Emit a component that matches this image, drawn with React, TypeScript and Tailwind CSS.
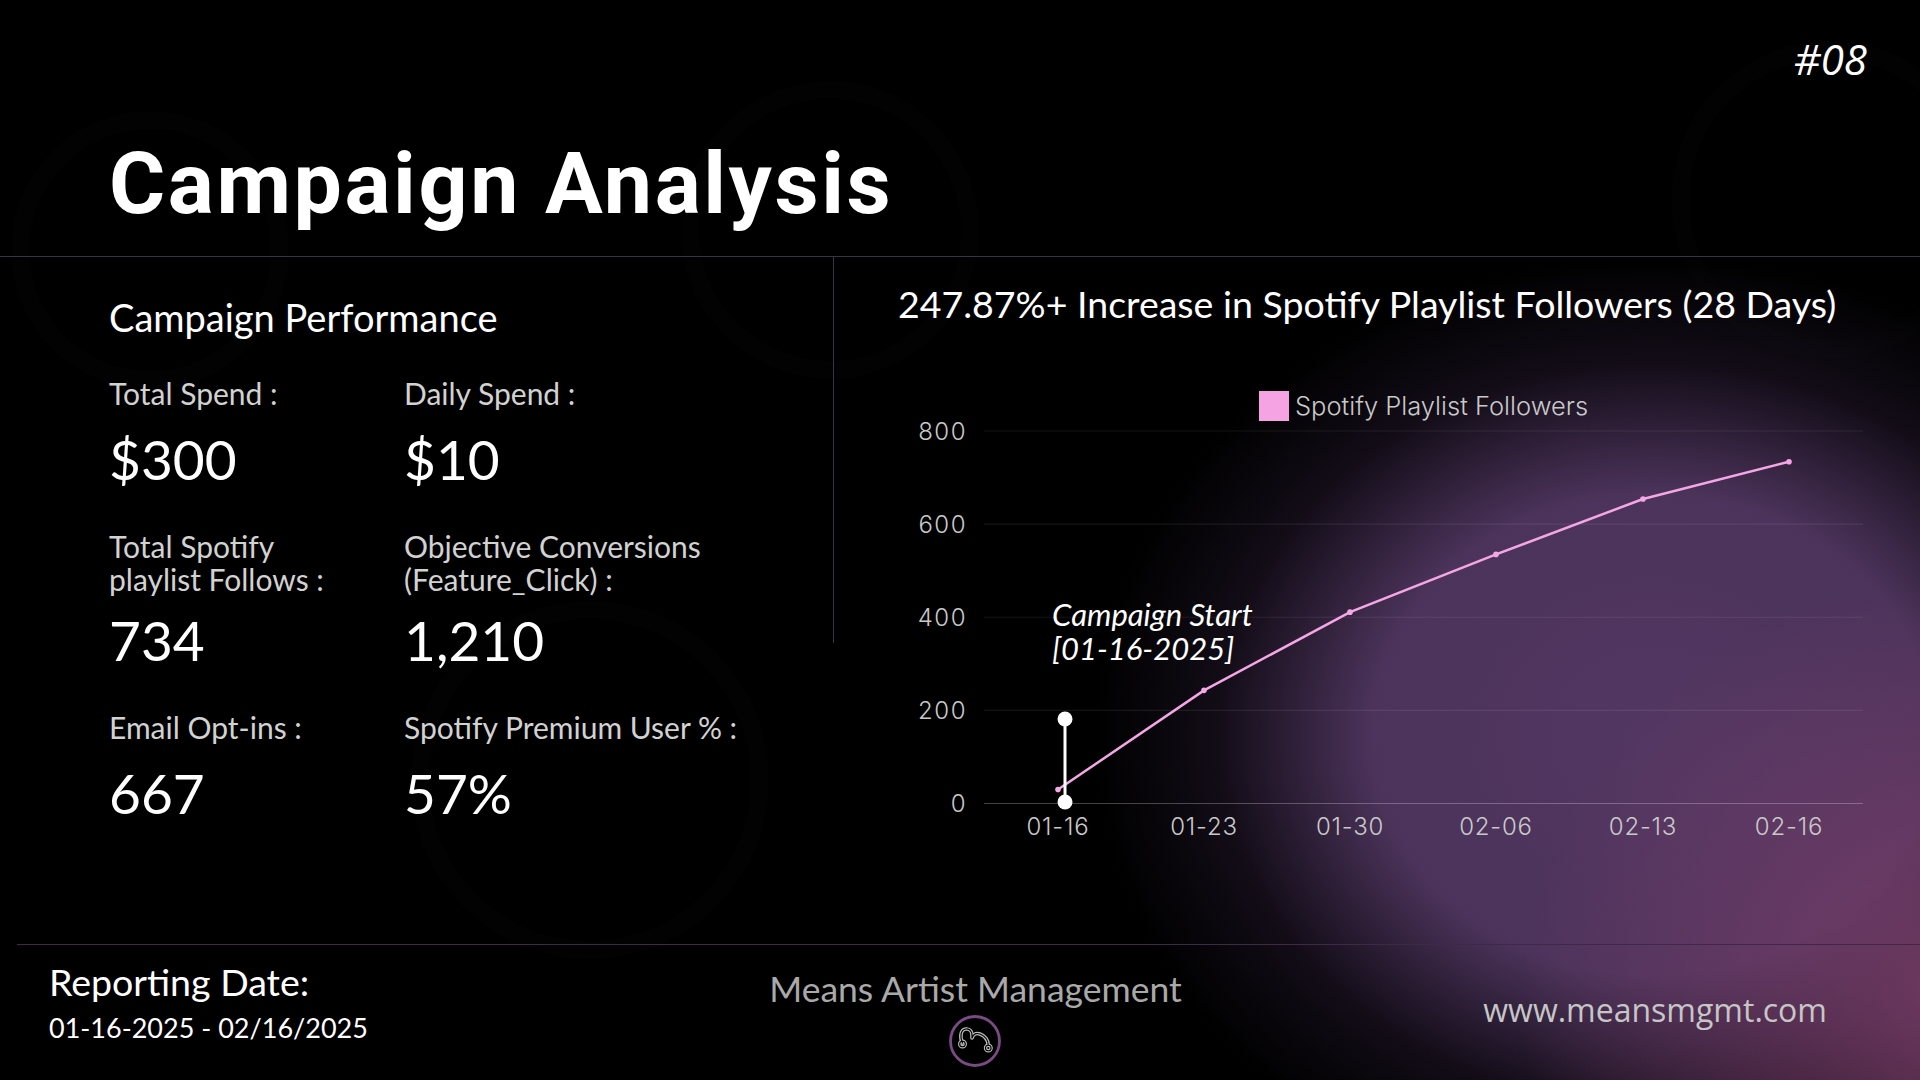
import React from "react";

const points = [
  { label: "01-16", x: 160, v: 30 },
  { label: "01-23", x: 306, v: 243 },
  { label: "01-30", x: 452, v: 411 },
  { label: "02-06", x: 598, v: 535 },
  { label: "02-13", x: 745, v: 654 },
  { label: "02-16", x: 891, v: 734 },
];

const ticks = [800, 600, 400, 200, 0];

function toY(v: number): number {
  return 433.5 - v * 0.4656;
}

const stats = [
  [
    { label: ["Total Spend :"], value: "$300" },
    { label: ["Daily Spend :"], value: "$10" },
  ],
  [
    { label: ["Total Spotify", "playlist Follows :"], value: "734" },
    { label: ["Objective Conversions", "(Feature_Click) :"], value: "1,210" },
  ],
  [
    { label: ["Email Opt-ins :"], value: "667" },
    { label: ["Spotify Premium User % :"], value: "57%" },
  ],
];

function FollowersChart() {
  const line = points.map((p) => `${p.x},${toY(p.v)}`).join(" ");
  return (
    <svg width="1020" height="480" viewBox="0 0 1020 480" className="mt-[44px] block">
      <rect x="361" y="21" width="30" height="30" fill="#f5a3e3" />
      <text x="397" y="45" fontSize="25.5" fill="#c9c9c9" fontFamily="Inter, sans-serif" fontWeight="300">
        Spotify Playlist Followers
      </text>

      {ticks.map((t) => (
        <g key={t}>
          <line
            x1="86"
            x2="965"
            y1={toY(t)}
            y2={toY(t)}
            stroke={t === 0 ? "rgba(255,255,255,0.26)" : "rgba(255,255,255,0.08)"}
            strokeWidth="1.2"
          />
          <text
            x="69"
            y={toY(t) + 8.5}
            textAnchor="end"
            fontSize="24"
            letterSpacing="1.5"
            fill="#c9c9c9"
            fontFamily="Inter, sans-serif"
            fontWeight="300"
          >
            {t}
          </text>
        </g>
      ))}

      {points.map((p) => (
        <text
          key={p.label}
          x={p.x}
          y="465"
          textAnchor="middle"
          fontSize="24"
          letterSpacing="0.8"
          fill="#c9c9c9"
          fontFamily="Inter, sans-serif"
          fontWeight="300"
        >
          {p.label}
        </text>
      ))}

      <polyline points={line} fill="none" stroke="#f4a7e4" strokeWidth="2.5" />
      {points.map((p) => (
        <circle key={p.label} cx={p.x} cy={toY(p.v)} r="2.8" fill="#f4a7e4" />
      ))}

      {/* campaign start marker */}
      <line x1="167" x2="167" y1="349" y2="432" stroke="#ffffff" strokeWidth="3" />
      <circle cx="167" cy="349" r="7.5" fill="#ffffff" />
      <circle cx="167" cy="432" r="7.5" fill="#ffffff" />
      <text fontSize="31" fill="#ffffff" fontStyle="italic" fontFamily="Lato, sans-serif">
        <tspan x="154" y="256">
          Campaign Start
        </tspan>
        <tspan x="154" y="290">
          [01-16-2025]
        </tspan>
      </text>
    </svg>
  );
}

function Logo() {
  const d =
    "M15.5 30 C12.5 24 13.5 16.5 19 16 C23.5 15.6 25 19 25 22.5 L25 25 C26.5 20.5 29.5 19.8 33 21 C38 23 41 27.5 41.2 32";
  return (
    <svg width="56" height="56" viewBox="0 0 56 56">
      <circle cx="28" cy="28" r="24.5" fill="none" stroke="#7a4a84" strokeWidth="2.8" />
      <g fill="none" strokeLinecap="round" strokeLinejoin="round">
        <path d={d} stroke="#bcbcbc" strokeWidth="3.6" />
        <circle cx="15.5" cy="31" r="2.8" stroke="#bcbcbc" strokeWidth="3.4" />
        <circle cx="41.3" cy="35" r="2.8" stroke="#bcbcbc" strokeWidth="3.4" />
        <path d={d} stroke="#000000" strokeWidth="1.2" />
        <circle cx="15.5" cy="31" r="2.8" stroke="#000000" strokeWidth="1.1" />
        <circle cx="41.3" cy="35" r="2.8" stroke="#000000" strokeWidth="1.1" />
      </g>
    </svg>
  );
}

export default function App() {
  return (
    <div className="relative w-[1920px] h-[1080px] overflow-hidden bg-black text-white font-['Lato',sans-serif]">
      {/* background glow */}
      <div className="pointer-events-none absolute inset-0 bg-[radial-gradient(ellipse_560px_480px_at_1653px_735px,rgba(82,55,98,1)_0%,rgba(80,54,96,0.95)_50%,rgba(40,27,50,0.45)_78%,rgba(0,0,0,0)_100%)]" />
      <div className="pointer-events-none absolute inset-0 bg-[radial-gradient(ellipse_440px_420px_at_1960px_1000px,rgba(122,62,106,0.9)_0%,rgba(122,62,106,0)_100%)]" />
      <svg className="pointer-events-none absolute inset-0" width="1920" height="1080">
        <g fill="none" stroke="rgba(255,255,255,0.008)" strokeWidth="18">
          <circle cx="150" cy="250" r="130" />
          <circle cx="830" cy="230" r="140" />
          <circle cx="1830" cy="200" r="150" />
          <circle cx="590" cy="780" r="170" />
        </g>
      </svg>

      <div className="relative flex flex-col h-full">
        <header className="h-[257px] shrink-0 border-b border-[#3a3342] flex flex-col">
          <div className="flex justify-end pt-[38px] pr-[53px]">
            <span className="text-[42px] leading-none italic font-['Open_Sans',sans-serif]">#08</span>
          </div>
          <h1 className="mt-[61px] pl-[109px] text-[86px] leading-none font-bold tracking-[0.03em] font-['Roboto',sans-serif]">
            Campaign Analysis
          </h1>
        </header>

        <main className="flex h-[687px] shrink-0">
          <section className="w-[833px] shrink-0 pl-[109px] pt-[40px]">
            <h2 className="text-[38px] leading-[40px]">Campaign Performance</h2>
            <div className="mt-[40px] flex flex-col gap-[43px]">
              {stats.map((row, i) => (
                <div key={i} className="grid grid-cols-[295px_1fr]">
                  {row.map((s) => (
                    <div key={s.value}>
                      <div className="text-[30px] leading-[33px] text-[#d2d2d2]">
                        {s.label.map((l) => (
                          <div key={l}>{l}</div>
                        ))}
                      </div>
                      <div
                        className={
                          s.label.length > 1
                            ? "mt-[16px] text-[55px] leading-[56px]"
                            : "mt-[21px] text-[55px] leading-[56px]"
                        }
                      >
                        {s.value}
                      </div>
                    </div>
                  ))}
                </div>
              ))}
            </div>
          </section>
          <div className="w-px h-[386px] bg-[#3a3342] shrink-0" />
          <section className="flex-1 pl-[64px] pt-[25px]">
            <h2 className="text-[37.5px] leading-[44px] whitespace-nowrap">
              247.87%+ Increase in Spotify Playlist Followers (28 Days)
            </h2>
            <FollowersChart />
          </section>
        </main>

        <footer className="ml-[17px] flex-1 border-t border-[#3e2a47] grid grid-cols-3">
          <div className="pl-[32px] pt-[17px]">
            <div className="text-[37.5px] leading-[40px]">Reporting Date:</div>
            <div className="mt-[9px] text-[27px] leading-[34px]">01-16-2025 - 02/16/2025</div>
          </div>
          <div className="flex flex-col items-center pl-[14px] pt-[24px]">
            <div className="text-[35.5px] leading-[40px] text-[#a9a9a9] whitespace-nowrap">Means Artist Management</div>
            <div className="mt-[4px]">
              <Logo />
            </div>
          </div>
          <div className="flex justify-end pr-[93px] pt-[45px]">
            <span className="text-[32px] leading-[40px] text-[#c6c6c6] font-['Open_Sans',sans-serif]">
              www.meansmgmt.com
            </span>
          </div>
        </footer>
      </div>
    </div>
  );
}
